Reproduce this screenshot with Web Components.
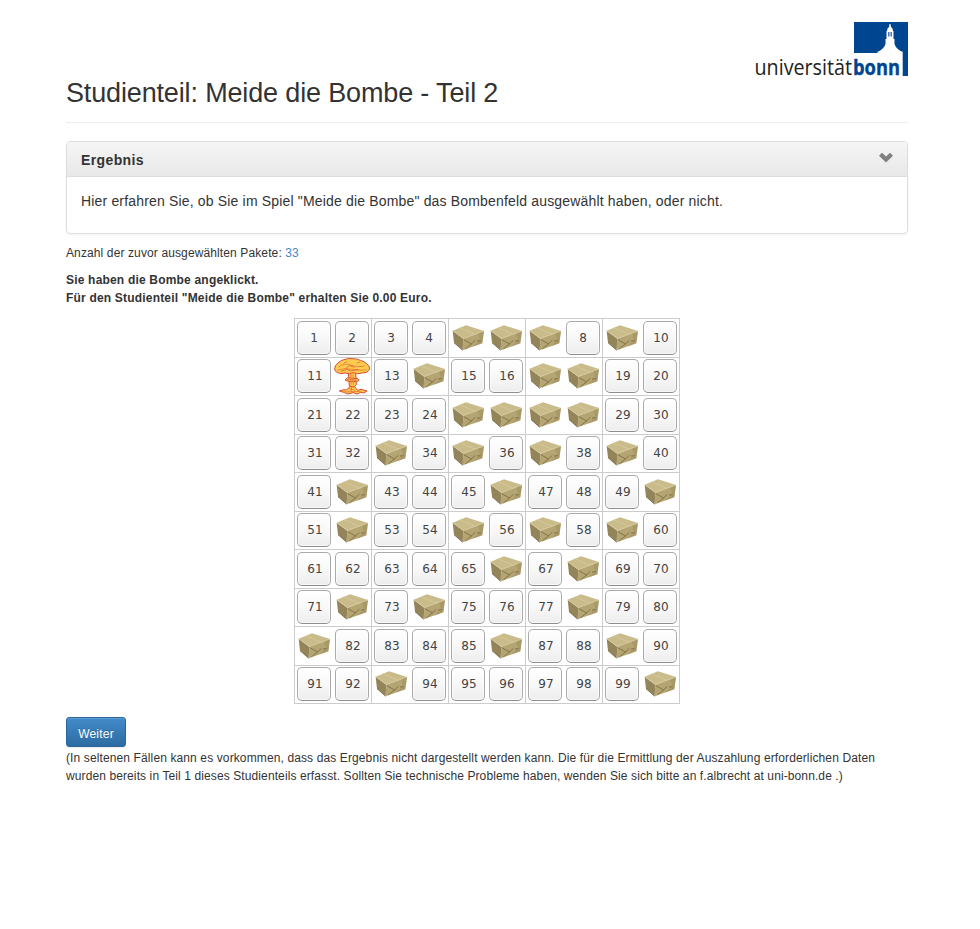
<!DOCTYPE html>
<html lang="de">
<head>
<meta charset="utf-8">
<title>Meide die Bombe</title>
<style>
body { margin: 0; background: #fff; color: #333; font: 12px/18px "Liberation Sans", Arial, sans-serif; }
</style>
</head>
<body>
<study-page></study-page>
<script>
const define = (name, html, setup) => customElements.define(name, class extends HTMLElement {
  connectedCallback() {
    if (this.shadowRoot) return;
    const t = document.createElement('template');
    t.innerHTML = html;
    this.attachShadow({ mode: 'open' }).append(t.content.cloneNode(true));
    if (setup) setup(this, this.shadowRoot);
  }
});

define('bonn-logo', `<style>:host{display:block;width:153px;height:64px}svg{display:block;overflow:visible}</style>
<svg width="153" height="64" viewBox="0 0 153 64">
  <path fill="#00458f" d="M99 0H153V54H147.700V29.500H146.500Q141 27 139.500 22V17H138.500V9H138L137.500 6.500 136 5 135.500 2H134.500L134 5 132.500 6.500 132 9H131.500V17H130.500V22Q129 27 123.500 29.500H122.500V31H99Z"/>
  <path fill="#00458f" d="M133.300 10h1.100v4.500h-1.100zM135.600 10h1.100v4.500h-1.100z"/>
  <text x="-.5" y="53" font-family="Open Sans, sans-serif" font-weight="400" font-size="21.500" textLength="97.500" lengthAdjust="spacingAndGlyphs" fill="#222">universität</text>
  <text x="98" y="53" font-family="Open Sans, sans-serif" font-weight="700" font-size="21.500" textLength="47" lengthAdjust="spacingAndGlyphs" fill="#00458f" stroke="#00458f" stroke-width=".4">bonn</text>
</svg>`);

define('page-header', `<style>
:host{display:flex;justify-content:space-between;align-items:flex-start;height:100px;border-bottom:1px solid #eee;margin-bottom:18px}
h1{margin:56px 0 0;font-size:27px;line-height:30px;font-weight:400;letter-spacing:-.15px}
</style><h1><slot></slot></h1><bonn-logo></bonn-logo>`);

define('info-panel', `<style>
:host{display:block;height:91px;border:1px solid #ddd;border-radius:4px;box-shadow:0 1px 2px rgba(0,0,0,.05);font-size:14px}
header{display:flex;justify-content:space-between;height:34px;padding:0 14px;border-bottom:1px solid #ddd;border-radius:3px 3px 0 0;background:linear-gradient(#f5f5f5,#e8e8e8);font-weight:700;line-height:36px;letter-spacing:.38px}
svg{margin-top:10px}
div{padding:14px;line-height:20px;letter-spacing:.17px}
</style><header><slot name="title"></slot><svg width="14" height="12" viewBox="0 0 14 12"><path fill="#808080" d="M3 .8 7 4.600 11 .8 14 3.800 7 10.400 0 3.800Z"/></svg></header><div><slot></slot></div>`);

define('number-box', `<style>
:host{display:flex;box-sizing:border-box;width:34px;height:34px;border:1px solid #aaa;border-bottom-color:#8e8e8e;border-radius:5px;background:linear-gradient(#fff,#f8f8f8 50%,#ededed);justify-content:center;align-items:center;font:12px/14px "DejaVu Sans",sans-serif;color:#444;box-shadow:inset 0 0 0 1px rgba(255,255,255,.6)}
:host([wide]){padding-left:2px}
</style><slot></slot>`);

define('parcel-box', `<style>:host{display:block;width:34px;height:34px}svg{display:block}</style>
<svg width="34" height="34" viewBox="3 9 102 102">
  <path fill="#94845a" d="M8 38 40 62 38 97 12 74Z"/>
  <path fill="#cabb8b" d="M8 38 48 22 102 39 40 62Z"/>
  <path fill="#b5a572" d="M40 62 102 39 97 76 38 97Z"/>
  <path fill="#9c8b5b" d="M97 76 102 39 84 46 90 65 70 86Z" opacity=".45"/>
  <path fill="none" stroke="#d9cda2" stroke-width="2" d="M29 29 76 49M8 38 40 61 102 39"/>
  <path fill="none" stroke="#6a5a38" stroke-width="2" d="M41 65 65 78M76 67 64 78 46 93M81 69 92 68M12 74 38 97"/>
</svg>`);

define('bomb-cloud', `<style>:host{display:block;width:37px;height:37px}svg{display:block}</style>
<svg width="37" height="37" viewBox="131 137 111 111">
  <g stroke="#dc4a38" stroke-width="3" stroke-linejoin="round" fill="#fbcb50">
  <path d="M147 236 161 232 169 233 180 221 191 221 202 234 212 231 230 236 221 242 211 240 201 245 188 241 173 245 160 240Z"/>
  <path d="M174 180 177 221 191 224 198 217 196 180Z"/>
  <path d="M165 202Q169 194 181 197L203 199Q209 203 204 206 185 211 166 205Z"/>
  <path d="M133 170Q132 160 143 152 152 143 164 141 175 137 187 139 200 139 210 144 222 147 229 154 239 161 238 171 230 184 216 182 200 187 190 181 176 187 165 182 151 187 141 180 134 179 133 170Z"/>
  </g>
  <path fill="none" stroke="#f0883a" stroke-width="3" d="M145 164Q162 151 179 158T223 162M141 174Q163 165 188 171T229 172M182 184V217M188 186 189 218M155 239 213 237M160 153 171 147M199 152 210 150M176 228 193 234"/>
  <path fill="none" stroke="#dc4a38" stroke-width="2" d="M168 166 178 160 193 165M152 177 169 171 182 176 205 171M170 202 198 203M184 225 182 237"/>
</svg>`);

define('bomb-field', `<style>
:host{display:grid;width:385px;grid-template-columns:repeat(10,38.500px);grid-auto-rows:38.500px;border-right:1px solid #ccc;border-bottom:1px solid #ccc;margin:0 auto}
div{box-sizing:border-box;border-top:1px solid #ccc;padding:1.600px 0 0 2.500px}
div:nth-of-type(odd){border-left:1px solid #ccc;padding-left:2px}
bomb-cloud{margin:-1px 0 0 -1px}
</style>`, (host, root) => {
  const parcels = new Set(host.getAttribute('parcels').split(' ').map(Number));
  const bomb = Number(host.getAttribute('bomb'));
  for (let n = 1; n <= 100; n++) {
    const cell = document.createElement('div');
    const item = document.createElement(n === bomb ? 'bomb-cloud' : parcels.has(n) ? 'parcel-box' : 'number-box');
    if (item.localName === 'number-box') {
      item.textContent = n;
      if (n > 9) item.setAttribute('wide', '');
    }
    cell.append(item);
    root.append(cell);
  }
});

define('primary-button', `<style>
:host{display:block;width:60px}
button{display:block;width:60px;height:30px;padding:3px 0 0;border:1px solid #2b669a;border-radius:3px;background:linear-gradient(#428bca,#2d6ca2);color:#fff;font:12px/18px "Liberation Sans",Arial,sans-serif;box-shadow:inset 0 1px 0 rgba(255,255,255,.15),0 1px 1px rgba(0,0,0,.075);text-shadow:0 -1px 0 rgba(0,0,0,.2);letter-spacing:.2px}
</style><button><slot></slot></button>`);

define('study-page', `<style>
:host{display:block;width:842px;padding:22px 0 0 66px}
p{margin:0 0 9px;letter-spacing:.118px}
.count{margin-top:10px}
b{letter-spacing:.19px}
a{color:#428bca}
bomb-field{margin:11px auto 13px}
.note{margin-top:2px}
</style>
<page-header>Studienteil: Meide die Bombe - Teil 2</page-header>
<info-panel><span slot="title">Ergebnis</span>Hier erfahren Sie, ob Sie im Spiel "Meide die Bombe" das Bombenfeld ausgewählt haben, oder nicht.</info-panel>
<p class="count">Anzahl der zuvor ausgewählten Pakete: <a>33</a></p>
<p><b>Sie haben die Bombe angeklickt.<br>Für den Studienteil "Meide die Bombe" erhalten Sie 0.00 Euro.</b></p>
<bomb-field bomb="12" parcels="5 6 7 9 14 17 18 25 26 27 28 33 35 37 39 42 46 50 52 55 57 59 66 68 72 74 78 81 86 89 93 100"></bomb-field>
<primary-button>Weiter</primary-button>
<p class="note">(In seltenen Fällen kann es vorkommen, dass das Ergebnis nicht dargestellt werden kann. Die für die Ermittlung der Auszahlung erforderlichen Daten<br><span style="letter-spacing:.105px">wurden bereits in Teil 1 dieses Studienteils erfasst. Sollten Sie technische Probleme haben, wenden Sie sich bitte an f.albrecht at uni-bonn.de .)</span></p>`);
</script>
</body>
</html>
